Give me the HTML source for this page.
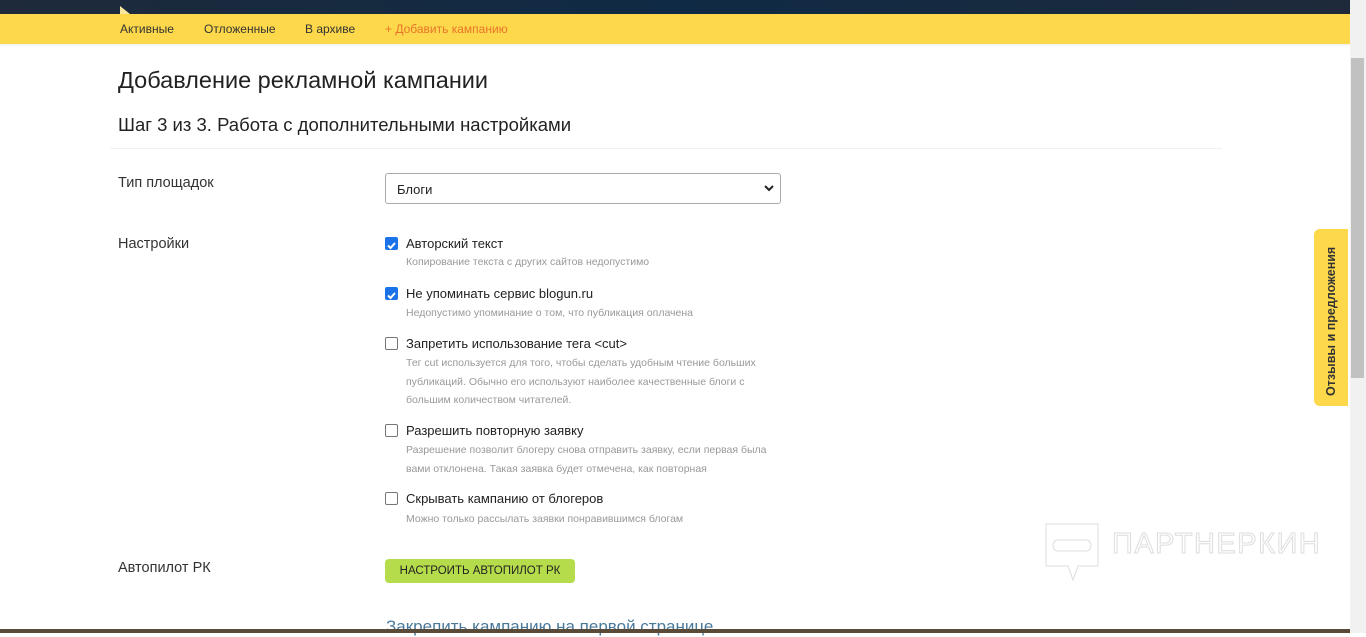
<!DOCTYPE html>
<html><head><meta charset="utf-8"><style>
*{margin:0;padding:0;box-sizing:border-box}
body{width:1366px;height:633px;overflow:hidden;background:#fff;font-family:"Liberation Sans","DejaVu Sans",sans-serif;position:relative;color:#222}
.top{position:absolute;left:0;top:0;width:1350px;height:14px;background:linear-gradient(90deg,#1e2a3a,#0f2a45 50%,#1e2a3a)}
.tri{position:absolute;left:120px;top:6px;width:0;height:0;border-left:10px solid #fbe6a0;border-top:8px solid transparent}
.nav{position:absolute;left:0;top:14px;width:1350px;height:30px;background:#fdd84b;font-size:12px;box-shadow:0 1px 2px rgba(0,0,0,.08)}
.nav span{position:absolute;top:8px;color:#333}
.abs{position:absolute}
h1{position:absolute;left:118px;top:67px;font-size:23.5px;font-weight:normal;color:#222}
h2{position:absolute;left:118px;top:114px;font-size:18.5px;font-weight:normal;color:#222}
.hr{position:absolute;left:110px;top:148px;width:1112px;height:1px;background:#f0f0f0}
.lbl{position:absolute;left:118px;font-size:14.5px;color:#333}
.sel{position:absolute;left:385px;top:173px;width:396px;height:31px;border:1px solid #aaa;border-radius:3px;font-size:13px;padding:8px 0 0 11px;color:#222}
.cb{position:absolute;left:385px;width:13px;height:13px;border:1px solid #767676;border-radius:2px;background:#fff}
.cb.on{background:#1a73e8;border-color:#1a73e8}
.t{position:absolute;left:406px;font-size:13px;color:#222}
.d{position:absolute;left:406px;font-size:10.5px;color:#999;line-height:18.5px;width:382px}
.btn{position:absolute;left:385px;top:559px;width:190px;height:24px;background:#b5dc4a;border-radius:4px;font-size:11.5px;text-align:center;line-height:24px;color:#222}
.link{position:absolute;left:386px;top:617px;font-size:17px;color:#4a7a9a}
.bot{position:absolute;left:0;top:629px;width:1350px;height:4px;background:#5a4a38}
.sb{position:absolute;left:1350px;top:0;width:16px;height:633px;background:#f1f1f1}
.th{position:absolute;left:1351px;top:58px;width:13px;height:320px;background:#c1c1c1}
.fb{position:absolute;left:1314px;top:229px;width:34px;height:177px;background:#fdd84b;border-radius:6px 0 0 6px}
.fb span{position:absolute;left:3px;top:167px;transform:rotate(-90deg);transform-origin:0 0;font-size:12.5px;font-weight:bold;color:#333;white-space:nowrap;line-height:28px}
.wm{position:absolute;left:1112px;top:528px;font-size:29px;color:#fff;-webkit-text-stroke:1px #ddd;letter-spacing:1.5px}
</style></head><body>
<div class="top"></div><div class="tri"></div>
<div class="nav"><span style="left:120px">Активные</span><span style="left:204px">Отложенные</span><span style="left:305px">В архиве</span><span style="left:385px;color:#e8742a">+ Добавить кампанию</span></div>
<h1>Добавление рекламной кампании</h1>
<h2>Шаг 3 из 3. Работа с дополнительными настройками</h2>
<div class="hr"></div>
<div class="lbl" style="top:175px">Тип площадок</div>
<div class="sel">Блоги<svg style="position:absolute;right:6px;top:11px" width="10" height="7" viewBox="0 0 10 7"><path d="M1 1l4 4 4-4" stroke="#222" stroke-width="2" fill="none"/></svg></div>
<div class="lbl" style="top:236px">Настройки</div>
<div class="cb on" style="top:237px"><svg width="11" height="11" viewBox="0 0 11 11"><path d="M2 5.5l2.5 2.5 4.5-5" stroke="#fff" stroke-width="2" fill="none"/></svg></div>
<div class="t" style="top:236px">Авторский текст</div>
<div class="d" style="top:253px">Копирование текста с других сайтов недопустимо</div>
<div class="cb on" style="top:287px"><svg width="11" height="11" viewBox="0 0 11 11"><path d="M2 5.5l2.5 2.5 4.5-5" stroke="#fff" stroke-width="2" fill="none"/></svg></div>
<div class="t" style="top:286px">Не упоминать сервис blogun.ru</div>
<div class="d" style="top:304px">Недопустимо упоминание о том, что публикация оплачена</div>
<div class="cb" style="top:337px"></div>
<div class="t" style="top:336px">Запретить использование тега &lt;cut&gt;</div>
<div class="d" style="top:354px">Тег cut используется для того, чтобы сделать удобным чтение больших публикаций. Обычно его используют наиболее качественные блоги с большим количеством читателей.</div>
<div class="cb" style="top:424px"></div>
<div class="t" style="top:423px">Разрешить повторную заявку</div>
<div class="d" style="top:441px">Разрешение позволит блогеру снова отправить заявку, если первая была вами отклонена. Такая заявка будет отмечена, как повторная</div>
<div class="cb" style="top:492px"></div>
<div class="t" style="top:491px">Скрывать кампанию от блогеров</div>
<div class="d" style="top:510px">Можно только рассылать заявки понравившимся блогам</div>
<div class="lbl" style="top:560px">Автопилот РК</div>
<div class="btn">НАСТРОИТЬ АВТОПИЛОТ РК</div>
<div class="link">Закрепить кампанию на первой странице</div>
<svg class="abs" style="left:1045px;top:523px" width="55" height="60" viewBox="0 0 55 60"><path d="M1 1h52v42H33l-5 14-5-14H1z" fill="none" stroke="#ddd"/><rect x="8" y="17" width="38" height="11" rx="5" fill="none" stroke="#ddd"/></svg>
<div class="wm">ПАРТНЕРКИН</div>
<div class="bot"></div>
<div class="sb"></div><div class="th"></div>
<div class="fb"><span>Отзывы и предложения</span></div>
</body></html>
